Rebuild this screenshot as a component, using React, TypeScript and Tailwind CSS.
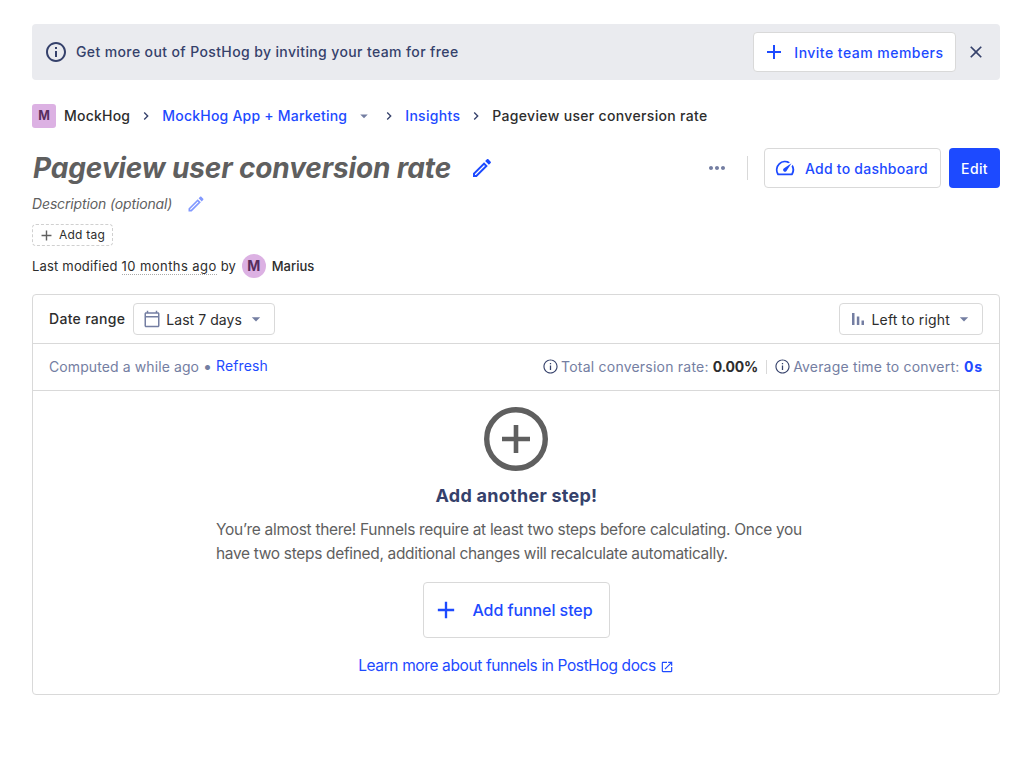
import type { ReactNode } from 'react'

const paths = {
  info: 'M11 7h2v2h-2zm0 4h2v6h-2zm1-9C6.48 2 2 6.48 2 12s4.48 10 10 10 10-4.48 10-10S17.52 2 12 2zm0 18c-4.41 0-8-3.59-8-8s3.59-8 8-8 8 3.59 8 8-3.59 8-8 8z',
  infoThin: 'M11.1 7h1.8v1.8h-1.8zm0 3.7h1.8v6.3h-1.8zM12 2C6.48 2 2 6.48 2 12s4.48 10 10 10 10-4.48 10-10S17.52 2 12 2zm0 18.4c-4.64 0-8.4-3.76-8.4-8.4S7.36 3.6 12 3.6s8.4 3.76 8.4 8.4-3.76 8.4-8.4 8.4z',
  plus: 'M19 13h-6v6h-2v-6H5v-2h6V5h2v6h6v2z',
  close: 'M19 6.41L17.59 5 12 10.59 6.41 5 5 6.41 10.59 12 5 17.59 6.41 19 12 13.41 17.59 19 19 17.59 13.41 12z',
  right: 'M10 6L8.59 7.41 13.17 12l-4.58 4.59L10 18l6-6z',
  down: 'M7 10l5 5 5-5z',
  edit: 'M14.06 9.02l.92.92L5.92 19H5v-.92l9.06-9.06M17.66 3c-.25 0-.51.1-.7.29l-1.83 1.83 3.75 3.75 1.83-1.83c.39-.39.39-1.02 0-1.41l-2.34-2.34c-.2-.2-.45-.29-.71-.29zm-3.6 3.19L3 17.25V21h3.75L17.81 9.94l-3.75-3.75z',
  dots: 'M6 10c-1.1 0-2 .9-2 2s.9 2 2 2 2-.9 2-2-.9-2-2-2zm12 0c-1.1 0-2 .9-2 2s.9 2 2 2 2-.9 2-2-.9-2-2-2zm-6 0c-1.1 0-2 .9-2 2s.9 2 2 2 2-.9 2-2-.9-2-2-2z',
  gauge: 'M20.38 8.57l-1.23 1.85a8 8 0 0 1-.22 7.58H5.07A8 8 0 0 1 15.58 6.85l1.85-1.23A10 10 0 0 0 3.35 19a2 2 0 0 0 1.72 1h13.85a2 2 0 0 0 1.74-1 10 10 0 0 0-.27-10.44zM10.59 15.41a2 2 0 0 0 2.83 0l5.66-8.49-8.49 5.66a2 2 0 0 0 0 2.83z',
  calendar: 'M20 3h-1V1h-2v2H7V1H5v2H4c-1.1 0-2 .9-2 2v16c0 1.1.9 2 2 2h16c1.1 0 2-.9 2-2V5c0-1.1-.9-2-2-2zm0 18H4V10h16v11zm0-13H4V5h16v3z',
  bars: 'M4.8 4.8h3v14.4h-3zM10.6 9h3v10.2h-3zM16.2 13.8h3v5.4h-3z',
  external: 'M19 19H5V5h7V3H5c-1.11 0-2 .9-2 2v14c0 1.1.89 2 2 2h14c1.1 0 2-.9 2-2v-7h-2v7zM14 3v2h3.59l-9.83 9.83 1.41 1.41L19 6.41V10h2V3h-7z',
}

function Icon({ name, className }: { name: keyof typeof paths; className: string }) {
  return (
    <svg viewBox="0 0 24 24" fill="currentColor" className={`shrink-0 ${className}`} aria-hidden="true">
      <path d={paths[name]} />
    </svg>
  )
}

function Button({ className, children }: { className: string; children: ReactNode }) {
  return (
    <button className={`flex shrink-0 items-center whitespace-nowrap rounded border border-[#d9d9d9] bg-white ${className}`}>
      {children}
    </button>
  )
}

export default function App() {
  return (
    <main className="h-[776px] w-[1032px] overflow-hidden bg-white px-8 pt-6 font-['Inter',sans-serif] text-sm text-[#2d2d2d]">
      <section className="flex h-14 items-center rounded bg-[#eaebef] pl-3 font-medium text-[#35416b]">
        <Icon name="info" className="size-6" />
        <span className="ml-2 tracking-[0.38px]">Get more out of PostHog by inviting your team for free</span>
        <Button className="ml-auto h-10 pl-2 pr-[11.5px] text-[#1d4aff]">
          <Icon name="plus" className="size-6" />
          <span className="ml-2 pt-0.5 tracking-[0.47px]">Invite team members</span>
        </Button>
        <Icon name="close" className="ml-2.5 mr-3.5 size-5" />
      </section>

      <nav className="mt-6 flex h-6 items-center font-medium tracking-[0.3px]">
        <span className="flex size-6 items-center justify-center rounded-[3px] bg-[#dcb1e3] text-[12.5px] font-bold tracking-normal text-[#572e5e]">M</span>
        <span className="ml-2 tracking-[0.22px]">MockHog</span>
        <Icon name="right" className="mx-2 size-4 text-[#35416b]" />
        <span className="tracking-[0.22px] text-[#1d4aff]">MockHog App + Marketing</span>
        <Icon name="down" className="ml-2 size-[18px] text-[#747ea2]" />
        <Icon name="right" className="mx-2 size-4 text-[#35416b]" />
        <span className="text-[#1d4aff]">Insights</span>
        <Icon name="right" className="mx-2 size-4 text-[#35416b]" />
        <span className="tracking-[0.33px]">Pageview user conversion rate</span>
      </nav>

      <header className="mt-5 flex h-10 items-center">
        <h1 className="ml-px whitespace-nowrap text-[28px] font-bold italic leading-10 tracking-[-0.14px] text-[#5f5f5f]">Pageview user conversion rate</h1>
        <Icon name="edit" className="ml-[19px] size-6 text-[#1d4aff]" />
        <Icon name="dots" className="ml-auto size-6 text-[#747ea2]" />
        <span className="ml-[18px] mr-4 h-6 w-px bg-[#d9d9d9]" />
        <Button className="h-10 pl-2 pr-3 font-medium text-[#1d4aff]">
          <Icon name="gauge" className="mx-px size-[22px]" />
          <span className="ml-2 pt-0.5 tracking-[0.23px]">Add to dashboard</span>
        </Button>
        <button className="ml-2 h-10 w-[51px] rounded bg-[#1d4aff] pt-0.5 font-medium tracking-[0.35px] text-white">Edit</button>
      </header>

      <div className="mt-1 flex h-6 items-center italic text-[#5f5f5f]">
        <span className="tracking-[-0.14px]">Description (optional)</span>
        <Icon name="edit" className="ml-3.5 size-5 text-[#8299ff]" />
      </div>
      <button className="mt-2 flex h-[22px] items-center rounded border border-dashed border-[#d0d0d0] pl-[5px] pr-[7px] text-xs">
        <Icon name="plus" className="size-[17px] text-[#606060]" />
        <span className="ml-1 tracking-[0.22px]">Add tag</span>
      </button>
      <div className="mt-2 flex h-6 items-center text-[13px]">
        <span className="tracking-[0.18px]">Last modified</span>
        <span className="ml-1 border-b border-dotted border-[#aaa] leading-4 tracking-[0.43px]">10 months ago</span>
        <span className="ml-1">by</span>
        <span className="ml-1.5 flex size-6 items-center justify-center rounded-full bg-[#dcb1e3] text-sm font-bold text-[#572e5e]">M</span>
        <span className="ml-1.5 font-medium">Marius</span>
      </div>

      <section className="mt-4 h-[401px] rounded border border-[#d9d9d9]">
        <div className="flex h-[49px] items-center border-b border-[#d9d9d9] px-4">
          <span className="font-medium tracking-[0.3px]">Date range</span>
          <Button className="ml-2 h-8 px-2">
            <Icon name="calendar" className="mx-px size-[18px] text-[#747ea2]" />
            <span className="ml-1 pt-0.5 tracking-[0.06px]">Last 7 days</span>
            <Icon name="down" className="ml-1 size-5 text-[#747ea2]" />
          </Button>
          <Button className="ml-auto h-8 px-2">
            <Icon name="bars" className="size-5 text-[#747ea2]" />
            <span className="ml-1 pt-0.5 tracking-[0.16px]">Left to right</span>
            <Icon name="down" className="ml-1 size-5 text-[#747ea2]" />
          </Button>
        </div>
        <div className="flex h-[47px] items-center border-b border-[#d9d9d9] px-4 text-[#747ea2]">
          <span className="tracking-[0.1px]">Computed a while ago</span>
          <span className="mb-0.5 ml-1 w-[9px] text-base">•</span>
          <span className="mb-0.5 ml-1 tracking-[0.1px] text-[#1d4aff]">Refresh</span>
          <Icon name="infoThin" className="mb-0.5 ml-auto size-[17px] text-[#35416b]" />
          <span className="ml-[2.5px] tracking-[0.22px]">Total conversion rate:</span>
          <span className="ml-1 font-bold tracking-[-0.2px] text-[#2d2d2d]">0.00%</span>
          <span className="ml-2 mr-[7px] h-3.5 w-px bg-[#d9d9d9]" />
          <Icon name="infoThin" className="mb-0.5 size-[17px] text-[#35416b]" />
          <span className="ml-[2px] tracking-[0.19px]">Average time to convert:</span>
          <span className="ml-[4.5px] font-bold tracking-[0.9px] text-[#1d4aff]">0s</span>
        </div>
        <div className="flex flex-col items-center pt-4 text-base">
          <svg viewBox="0 0 64 64" className="size-16" fill="none" stroke="#5f5f5f">
            <circle cx="32" cy="32" r="29.3" strokeWidth="5.4" />
            <path d="M32 18v28M18 32h28" strokeWidth="4.6" />
          </svg>
          <h2 className="ml-px mt-2.5 text-lg font-bold leading-[30px] tracking-[0.26px] text-[#35416b]">Add another step!</h2>
          <p className="mt-[7px] w-[600px] whitespace-nowrap text-[15.5px] leading-6 tracking-[-0.3px] text-[#5f5f5f]">
            You’re almost there! Funnels require at least two steps before calculating. Once you<br />
            <span className="tracking-[-0.33px]">have two steps defined, additional changes will recalculate automatically.</span>
          </p>
          <Button className="ml-px mt-4 h-14 pl-2 pr-4 font-medium text-[#1d4aff]">
            <Icon name="plus" className="size-7" />
            <span className="ml-3 tracking-[-0.07px]">Add funnel step</span>
          </Button>
          <a className="mt-4 flex h-6 items-center whitespace-nowrap text-[#1d4aff]">
            <span className="text-[15.5px] tracking-[-0.38px]">Learn more about funnels in PostHog docs</span>
            <Icon name="external" className="ml-1 mt-0.5 size-3.5" />
          </a>
        </div>
      </section>
    </main>
  )
}
